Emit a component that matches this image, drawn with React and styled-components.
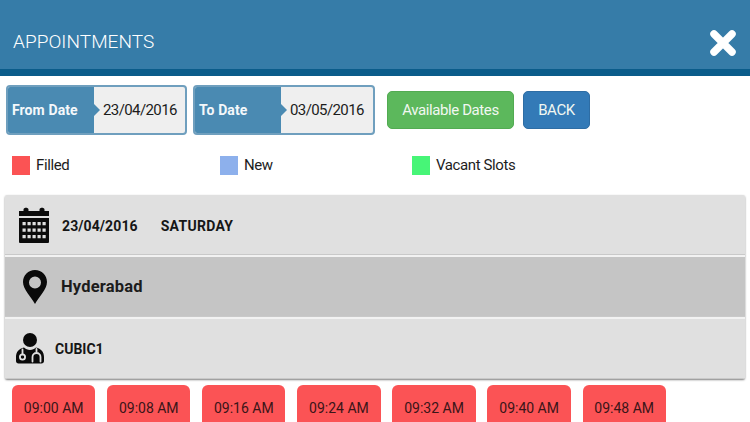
import React from "react";
import styled, { createGlobalStyle } from "styled-components";

const Global = createGlobalStyle`
  html, body { margin: 0; padding: 0; background: #fff; }
  body { font-family: Roboto, "Liberation Sans", sans-serif; }
`;
const Page = styled.div`
  width: 750px; height: 422px; overflow: hidden; display: flex; flex-direction: column; background: #fff;
`;
const Header = styled.header`
  height: 69px; box-sizing: content-box; background: #367ca8; border-bottom: 7px solid #0b5c8a;
  display: flex; align-items: flex-end; justify-content: space-between;
  padding: 0 13px 0 13px; flex: none;
`;
const Title = styled.h1`
  margin: 0 0 17px; font-size: 19px; line-height: 21px; font-weight: 300; color: #fff; letter-spacing: 0.05px;
`;
const Close = styled.svg`
  width: 28px; height: 28px; margin-bottom: 12px; display: block;
`;
const Toolbar = styled.div`
  display: flex; align-items: center; padding: 9px 0 0 6px; height: 50px; flex: none;
`;
const DateBox = styled.div`
  width: ${p => p.$w}px; height: 50px; box-sizing: border-box; margin-right: 6px;
  border: 2px solid #6f9fbe; border-radius: 4px; display: flex; overflow: hidden; background: #efefef;
`;
const DateLabel = styled.div`
  position: relative; width: 86px; flex: none; background: #4a8ab2; color: #f4f8fb;
  font-size: 14px; font-weight: 700; line-height: 46px; padding-left: 4px; box-sizing: border-box; letter-spacing: 0.1px;
  &::after {
    content: ""; position: absolute; right: -6px; top: 17px; width: 0; height: 0;
    border-left: 6px solid #4a8ab2; border-top: 6px solid transparent; border-bottom: 6px solid transparent;
  }
`;
const DateValue = styled.div`
  flex: 1; font-size: 15px; line-height: 46px; color: #1c1c1c; padding-left: 9px; white-space: nowrap; letter-spacing: -0.6px;
`;
const Button = styled.button`
  height: 38px; width: ${p => p.$w}px; margin-left: ${p => p.$ml}px; padding: 0;
  border: 1px solid ${p => p.$border}; border-radius: 5px; background: ${p => p.$bg};
  color: #f1f7f1; font: 400 15px Roboto, sans-serif; flex: none; letter-spacing: ${p => p.$ls}px;
`;
const Legend = styled.div`
  display: grid; grid-template-columns: 208px 192px auto; padding: 20px 0 0 12px; height: 20px; flex: none;
`;
const LegendItem = styled.div`
  display: flex; align-items: center; gap: 6px; font-size: 15px; line-height: 20px; color: #1d1d1d; letter-spacing: -0.4px;
`;
const Swatch = styled.span`
  width: 18px; height: 19px; background: ${p => p.$c}; display: block;
`;
const Card = styled.section`
  margin: 20px 5px 0; width: 740px; height: 184px; flex: none; box-sizing: border-box;
  background: #f2f2f2; border-radius: 2px; box-shadow: 0 1px 2px rgba(0,0,0,.5);
  display: flex; flex-direction: column; gap: 2px; overflow: hidden;
`;
const Row = styled.div`
  flex: 1; display: flex; align-items: center; background: ${p => p.$bg};
  border-bottom: 1px solid #c9c9c9;
`;
const IconCell = styled.div`
  width: ${p => p.$w}px; flex: none; display: flex; justify-content: center; padding-left: ${p => p.$pl || 0}px; box-sizing: border-box;
`;
const DateText = styled.span`
  font-size: 14px; font-weight: 700; color: #161616; margin: 2px ${p => p.$mr || 0}px 0 0; letter-spacing: ${p => p.$ls}px;
`;
const City = styled.span`
  font-size: 16.5px; font-weight: 700; color: #1c1c1c; letter-spacing: 0.2px;
`;
const Doctor = styled.span`
  font-size: 14px; font-weight: 700; color: #161616;
`;
const Slots = styled.div`
  display: flex; gap: 11.8px; padding: 6px 0 0 12px; flex: none;
`;
const Slot = styled.div`
  width: 83.3px; height: 60px; flex: none; background: #fb5355; border-radius: 6px 6px 0 0; box-sizing: border-box;
  padding-top: 14px; text-align: center; font-size: 14px; line-height: 18px; color: #3a1518;
`;

const calendarDots = [0, 1, 2].flatMap(r => [0, 1, 2, 3, 4].map(c => `M${3.5 + c * 5} ${15 + r * 6.5}h3.200v3.200h-3.200z`)).join("");

const CalendarIcon = () => (
  <svg width="30" height="36" viewBox="0 0 30 36" style={{ display: "block" }}>
    <path fill="#0c0c0c" d="M0 4h4.500V2.500C4.500 0 9.500 0 9.500 2.500V4h11V2.500c0-2.500 5-2.500 5 0V4H30v5H0z" />
    <path fill="#0c0c0c" fillRule="evenodd" d={"M0 11h30v24a1 1 0 0 1-1 1H1a1 1 0 0 1-1-1z" + calendarDots} />
  </svg>
);
const PinIcon = () => (
  <svg width="24" height="34" viewBox="0 0 24 34" style={{ display: "block" }}>
    <path fill="#0a0a0a" fillRule="evenodd" d="M12 0C5.200 0 0 5.300 0 12c0 7.500 8 14.500 12 22 4-7.500 12-14.500 12-22C24 5.300 18.800 0 12 0zm0 6.500a6 6 0 1 1 0 12 6 6 0 0 1 0-12z" />
  </svg>
);
const DoctorIcon = () => (
  <svg width="28" height="31" viewBox="0 0 28 31" style={{ display: "block" }}>
    <circle cx="14" cy="7" r="7" fill="#0a0a0a" />
    <path fill="#0a0a0a" d="M8 14.500C3 15.500 0 19 0 24v4c0 1.500 1 2.500 2.500 2.500h23c1.500 0 2.500-1 2.500-2.500v-4c0-5-3-8.500-8-9.500-1.500 1.500-3.700 2.500-6 2.500s-4.500-1-6-2.500z" />
    <circle cx="6.500" cy="24" r="2.600" fill="none" stroke="#e0e0e0" strokeWidth="1.800" />
    <path fill="none" stroke="#e0e0e0" strokeWidth="1.800" strokeLinecap="round" d="M6.500 21.400V16.500M16.500 28.500v-4.500a4 4 0 0 1 8 0v4.500M20.500 20V16" />
  </svg>
);

const times = ["09:00 AM", "09:08 AM", "09:16 AM", "09:24 AM", "09:32 AM", "09:40 AM", "09:48 AM"];

export default function App() {
  return (
    <Page>
      <Global />
      <Header>
        <Title>APPOINTMENTS</Title>
        <Close viewBox="0 0 28 28">
          <path d="M5 5l18 18M23 5L5 23" stroke="#fff" strokeWidth="7.500" strokeLinecap="round" />
        </Close>
      </Header>
      <Toolbar>
        <DateBox $w={181}>
          <DateLabel>From Date</DateLabel>
          <DateValue>23/04/2016</DateValue>
        </DateBox>
        <DateBox $w={182}>
          <DateLabel>To Date</DateLabel>
          <DateValue>03/05/2016</DateValue>
        </DateBox>
        <Button $w={127} $ml={6} $bg="#5cb85c" $border="#52ab52" $ls={-0.4}>Available Dates</Button>
        <Button $w={67} $ml={9} $bg="#337ab7" $border="#2e6da4" $ls={-0.4}>BACK</Button>
      </Toolbar>
      <Legend>
        <LegendItem><Swatch $c="#fb5354" />Filled</LegendItem>
        <LegendItem><Swatch $c="#8db0ec" />New</LegendItem>
        <LegendItem><Swatch $c="#47f577" />Vacant Slots</LegendItem>
      </Legend>
      <Card>
        <Row $bg="#e0e0e0">
          <IconCell $w={57}><CalendarIcon /></IconCell>
          <DateText $mr={23} $ls={0.1}>23/04/2016</DateText>
          <DateText $ls={0.3}>SATURDAY</DateText>
        </Row>
        <Row $bg="#c5c5c5">
          <IconCell $w={56} $pl={3}><PinIcon /></IconCell>
          <City>Hyderabad</City>
        </Row>
        <Row $bg="#e0e0e0">
          <IconCell $w={50}><DoctorIcon /></IconCell>
          <Doctor>CUBIC1</Doctor>
        </Row>
      </Card>
      <Slots>
        {times.map(t => <Slot key={t}>{t}</Slot>)}
      </Slots>
    </Page>
  );
}
